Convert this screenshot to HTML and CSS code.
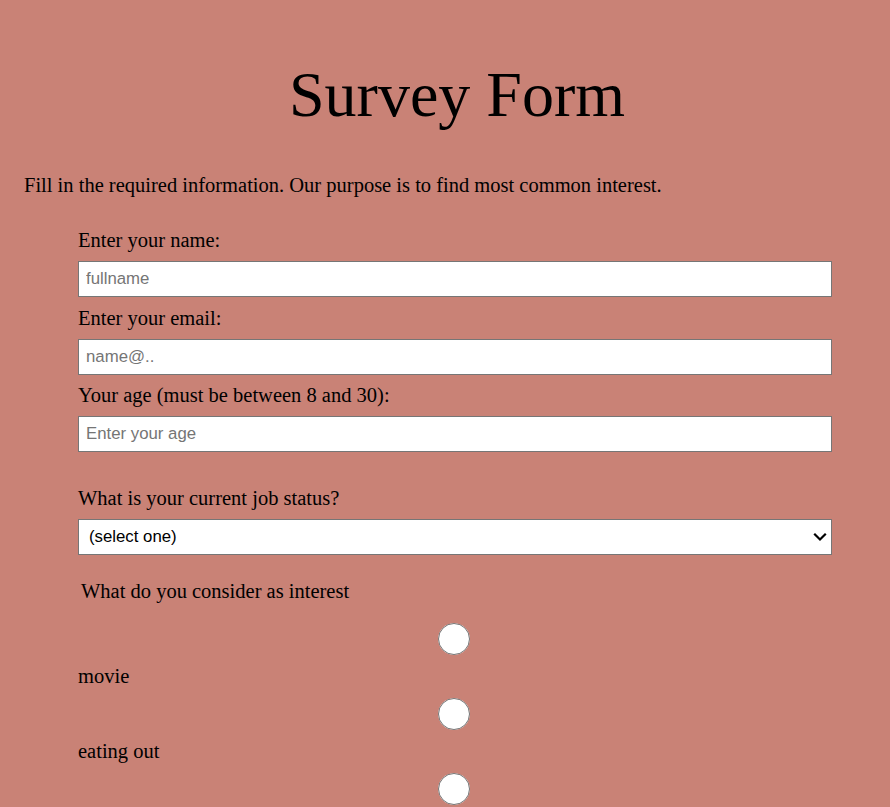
FILE: index.html
```html
<!DOCTYPE html>
<html lang="en">
<head>
<meta charset="utf-8">
<title>Survey Form</title>
<link rel="stylesheet" href="styles.css">
</head>
<body>
<main class="page">
  <h1 class="title" id="title">Survey Form</h1>
  <p class="description" id="description">Fill in the required information. Our purpose is to find most common interest.</p>
  <form class="survey" id="survey-form">
    <div class="field">
      <label class="label" for="name" id="name-label">Enter your name:</label>
      <input class="input" type="text" id="name" placeholder="fullname" required>
    </div>
    <div class="field">
      <label class="label" for="email" id="email-label">Enter your email:</label>
      <input class="input" type="email" id="email" placeholder="name@.." required>
    </div>
    <div class="field">
      <label class="label" for="number" id="number-label">Your age (must be between 8 and 30):</label>
      <input class="input" type="number" id="number" min="8" max="30" placeholder="Enter your age">
    </div>
    <div class="field field-select">
      <label class="label" for="dropdown">What is your current job status?</label>
      <div class="select-wrap">
        <select class="select" id="dropdown">
          <option>(select one)</option>
          <option>Student</option>
          <option>Full time job</option>
          <option>Part time job</option>
        </select>
        <svg class="chevron" width="14" height="10" viewBox="0 0 14 10" aria-hidden="true">
          <path d="M2 2.5 L7 7.5 L12 2.5" fill="none" stroke="#000" stroke-width="2.2" stroke-linecap="square"/>
        </svg>
      </div>
    </div>
    <div class="group">
      <p class="group-title">What do you consider as interest</p>
      <div class="radio-item">
        <input class="radio" type="radio" name="interest" id="movie" value="movie">
        <label class="label" for="movie">movie</label>
      </div>
      <div class="radio-item">
        <input class="radio" type="radio" name="interest" id="eating" value="eating out">
        <label class="label" for="eating">eating out</label>
      </div>
      <div class="radio-item">
        <input class="radio" type="radio" name="interest" id="travel" value="travel">
        <label class="label" for="travel">travel</label>
      </div>
    </div>
  </form>
</main>
</body>
</html>
```

FILE: styles.css
```css
html, body {
  margin: 0;
  padding: 0;
}
body {
  background: #c98276;
  font-family: "Liberation Serif", "Times New Roman", serif;
  color: #000;
}
.page {
  padding: 0 0 40px 24px;
}
.title {
  font-size: 64px;
  font-weight: normal;
  text-align: center;
  margin: 0;
  padding-top: 58px;
  line-height: 74px;
}
.description {
  font-size: 20.5px;
  line-height: 23px;
  margin: 42px 0 0 0;
}
.survey {
  width: 754px;
  margin: 32px 0 0 54px;
}
.field {
  display: flex;
  flex-direction: column;
}
.label {
  display: block;
  font-size: 20.5px;
  line-height: 23px;
}
.input, .select {
  box-sizing: border-box;
  width: 100%;
  height: 36px;
  margin: 9px 0 9.5px 0;
  border: 1px solid #767676;
  border-radius: 0;
  background: #fff;
  font-family: "Liberation Sans", Arial, sans-serif;
  font-size: 16.8px;
  padding: 0 8px 0 7px;
  color: #000;
}
.input::placeholder {
  color: #757575;
}
.field-select {
  margin-top: 25px;
}
.select-wrap {
  position: relative;
  margin-top: 9px;
}
.select {
  appearance: none;
  -webkit-appearance: none;
  display: block;
  margin: 0;
  padding: 0 30px 0 10px;
}
.chevron {
  position: absolute;
  right: 5px;
  top: 13px;
  pointer-events: none;
}
.group {
  margin-top: 25px;
}
.group-title {
  margin: 0 0 0 3px;
  font-size: 20.5px;
  line-height: 23px;
}
.radio-item {
  display: flex;
  flex-direction: column;
}
.radio {
  width: 32px;
  height: 32px;
  margin: 20px auto 10px 360px;
  display: block;
}
.radio-item + .radio-item .radio {
  margin-top: 10px;
}
```
